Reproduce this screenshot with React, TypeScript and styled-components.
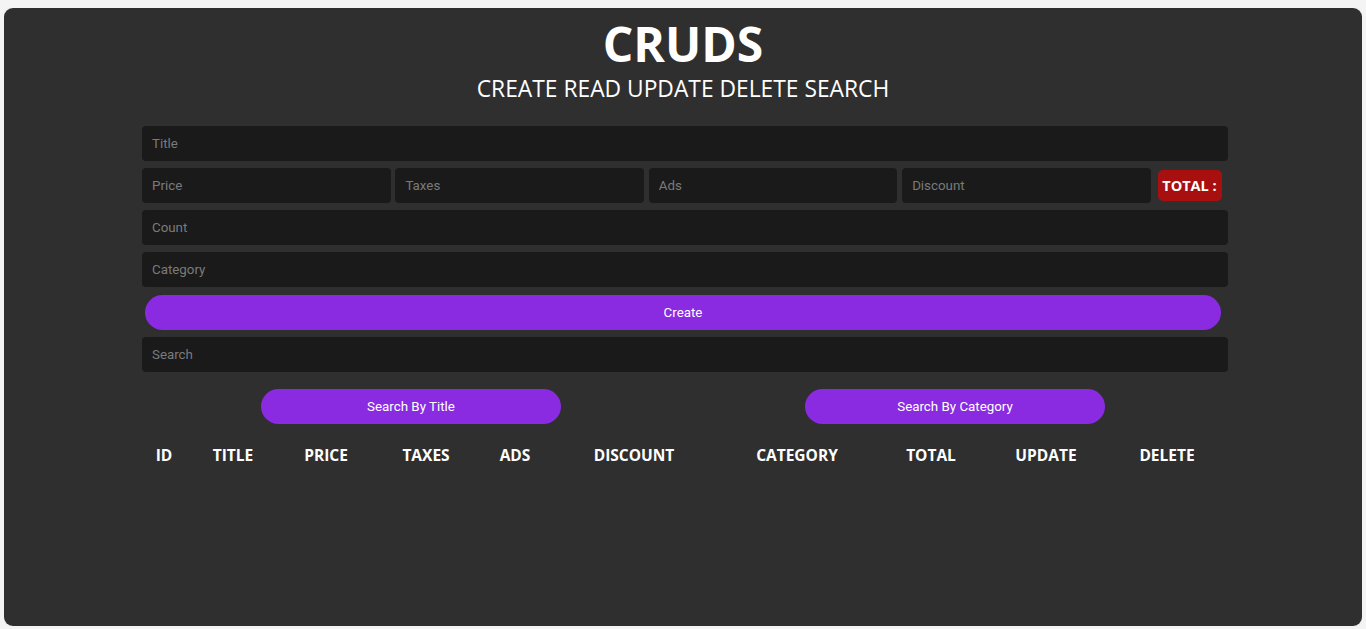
import React from "react";
import styled, { createGlobalStyle } from "styled-components";

const Global = createGlobalStyle`
  html, body { background: #f4f4f4; }
  body { margin: 8px 4px 3px 4px; }
  * { box-sizing: border-box; }
`;

const Panel = styled.div`
  background: #2f2f2f;
  border-radius: 9px;
  height: 618px;
  color: #fff;
  box-shadow: 0 0 2px rgba(0,0,0,0.15);
`;

const Crud = styled.div`
  width: 1090px;
  padding-left: 4px;
  margin: 0 auto;
`;

const Head = styled.header`
  text-align: center;
  padding-top: 10px;
  margin-left: -4px;
  font-family: "Open Sans", "Noto Sans", sans-serif;
`;

const Title = styled.h1`
  margin: 0;
  font-size: 48px;
  line-height: 52px;
  font-weight: 700;
`;

const Subtitle = styled.h2`
  margin: 4px 0 0;
  font-size: 22.8px;
  line-height: 30px;
  font-weight: 400;
`;

const Form = styled.div`
  margin-top: 22px;
  display: flex;
  flex-direction: column;
  gap: 7px;
`;

const Input = styled.input`
  width: 100%;
  height: 35px;
  border: none;
  outline: none;
  background: #1a1a1a;
  border-radius: 4px;
  padding: 0 10px;
  color: #fff;
  font-family: Roboto, "Liberation Sans", sans-serif;
  font-size: 13.33px;
  &::placeholder { color: #7a7a7a; }
`;

const PriceRow = styled.div`
  display: grid;
  grid-template-columns: repeat(4, 248.7px) 66px;
  column-gap: 4.7px;
  align-items: center;
`;

const Total = styled.small`
  margin-left: 2px;
  width: 64px;
  height: 31px;
  background: #a81010;
  border-radius: 5px;
  display: flex;
  align-items: center;
  justify-content: center;
  font-family: "Open Sans", "Noto Sans", sans-serif;
  font-weight: 700;
  font-size: 14.5px;
  color: #fff;
`;

const Button = styled.button<{ $wide?: boolean }>`
  height: 35px;
  border: none;
  border-radius: 18px;
  background: #8a2be2;
  color: #fff;
  font-family: Roboto, "Liberation Sans", sans-serif;
  font-size: 13.33px;
  cursor: pointer;
  width: ${(p) => (p.$wide ? "auto" : "300px")};
  margin: ${(p) => (p.$wide ? "1px 7px 0 3px" : "0")};
`;

const SearchButtons = styled.div`
  display: flex;
  margin: 17px 1px 0 -3px;
`;

const Half = styled.div`
  flex: 1;
  display: flex;
  justify-content: center;
`;

const Table = styled.table`
  width: 100%;
  margin-top: 19px;
  border-collapse: collapse;
  table-layout: fixed;
  font-family: "Open Sans", "Noto Sans", sans-serif;
`;

const Th = styled.th`
  font-size: 15.5px;
  font-weight: 700;
  text-transform: uppercase;
  padding: 0;
  height: 24px;
  text-align: center;
`;

const cols: [string, number][] = [
  ["id", 44],
  ["title", 94],
  ["price", 92],
  ["taxes", 108],
  ["ads", 70],
  ["discount", 168],
  ["category", 158],
  ["total", 110],
  ["update", 120],
  ["delete", 122],
];

export default function App() {
  return (
    <>
      <Global />
      <Panel>
        <Crud>
          <Head>
            <Title>CRUDS</Title>
            <Subtitle>CREATE READ UPDATE DELETE SEARCH</Subtitle>
          </Head>
          <Form>
            <Input placeholder="Title" />
            <PriceRow>
              <Input placeholder="Price" />
              <Input placeholder="Taxes" />
              <Input placeholder="Ads" />
              <Input placeholder="Discount" />
              <Total>TOTAL :</Total>
            </PriceRow>
            <Input placeholder="Count" />
            <Input placeholder="Category" />
            <Button $wide>Create</Button>
            <Input placeholder="Search" />
          </Form>
          <SearchButtons>
            <Half><Button>Search By Title</Button></Half>
            <Half><Button>Search By Category</Button></Half>
          </SearchButtons>
          <Table>
            <colgroup>
              {cols.map(([k, w]) => (
                <col key={k} style={{ width: w }} />
              ))}
            </colgroup>
            <thead>
              <tr>
                {cols.map(([k]) => (
                  <Th key={k}>{k}</Th>
                ))}
              </tr>
            </thead>
          </Table>
        </Crud>
      </Panel>
    </>
  );
}
